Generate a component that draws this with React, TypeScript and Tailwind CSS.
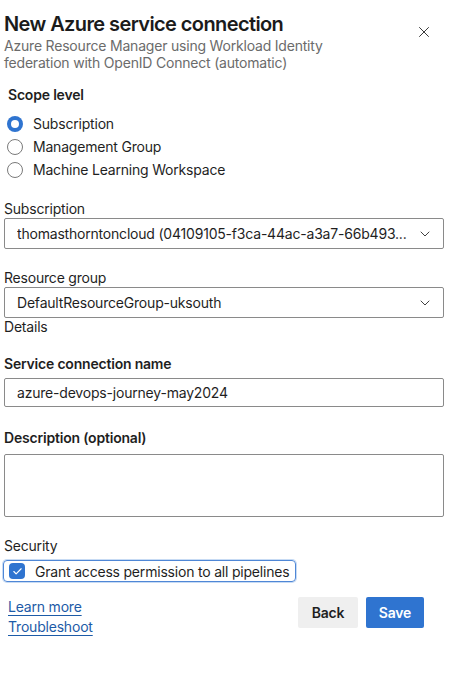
import { ChevronDown, X, Check } from 'lucide-react';

// Service connection panel — "Workload Identity federation (automatic)" step.

const radioOptions = ['Subscription', 'Management Group', 'Machine Learning Workspace'];

function Radio({ label, checked }: { label: string; checked?: boolean }) {
  return (
    <div className="flex items-center h-[23px] pl-[7px]">
      {checked ? (
        <span className="w-[16px] h-[16px] rounded-full bg-[#2f74d0] flex items-center justify-center">
          <span className="w-[8px] h-[8px] rounded-full bg-white" />
        </span>
      ) : (
        <span className="w-[16px] h-[16px] rounded-full border border-[#7a7a7a] bg-white" />
      )}
      <span className="ml-[10px] text-[14px] text-[#1f1f1f]">{label}</span>
    </div>
  );
}

function Select({ value }: { value: string }) {
  return (
    <div className="ml-[4px] mr-[10px] h-[31px] border border-[#8a8a8a] rounded-[2px] flex items-center pl-[12px] pr-[10px]">
      <span className="flex-1 whitespace-nowrap overflow-hidden text-[14px] text-[#1f1f1f]">{value}</span>
      <ChevronDown size={16} strokeWidth={1.4} className="text-[#333] ml-2 shrink-0" />
    </div>
  );
}

export default function App() {
  return (
    <div
      className="w-[454px] h-[691px] bg-white text-[#1f1f1f] overflow-hidden tracking-[-0.2px]"
      style={{ fontFamily: 'Inter, "Noto Sans", sans-serif' }}
    >
      <div className="flex items-start justify-between pt-[12px] pl-[4px] pr-[21px]">
        <div>
          <h1 className="text-[20px] leading-[25px] font-semibold tracking-[-0.6px] text-[#1b1b1b]">
            New Azure service connection
          </h1>
          <p className="text-[14px] leading-[17px] text-[#6b6b6b]">
            Azure Resource Manager using Workload Identity
            <br />
            federation with OpenID Connect (automatic)
          </p>
        </div>
        <X size={18} strokeWidth={1.3} className="mt-[11px] text-[#333]" />
      </div>

      <div className="mt-[15px] pl-[8px] text-[14px] leading-[18px] font-semibold">Scope level</div>
      <div className="mt-[8px]">
        {radioOptions.map((o, i) => (
          <Radio key={o} label={o} checked={i === 0} />
        ))}
      </div>

      <div className="mt-[19px] pl-[4px] text-[14px] leading-[18px]">Subscription</div>
      <Select value="thomasthorntoncloud (04109105-f3ca-44ac-a3a7-66b493..." />

      <div className="mt-[20px] pl-[4px] text-[14px] leading-[18px]">Resource group</div>
      <Select value="DefaultResourceGroup-uksouth" />
      <div className="pl-[4px] text-[14px] leading-[18px]">Details</div>

      <div className="mt-[19px] pl-[4px] text-[14px] leading-[18px] font-semibold">Service connection name</div>
      <div className="mt-[5px] ml-[4px] mr-[10px] h-[29px] border border-[#8a8a8a] rounded-[2px] flex items-center pl-[12px] text-[14px]">
        azure-devops-journey-may2024
      </div>

      <div className="mt-[22px] pl-[4px] text-[14px] leading-[18px] font-semibold">Description (optional)</div>
      <div className="mt-[7px] ml-[4px] mr-[10px] h-[63px] border border-[#8a8a8a] rounded-[2px]" />

      <div className="mt-[20px] pl-[4px] text-[14px] leading-[18px]">Security</div>
      <div className="mt-[5px] ml-[3px] w-[293px] h-[22px] border border-[#4f87d6] rounded-[4px] ring-1 ring-[#c7dbf4] flex items-center pl-[5px] whitespace-nowrap">
        <span className="w-[16px] h-[16px] rounded-[4px] bg-[#2f74d0] flex items-center justify-center shrink-0">
          <Check size={11} strokeWidth={2.5} className="text-white" />
        </span>
        <span className="ml-[10px] text-[14px]">Grant access permission to all pipelines</span>
      </div>

      <div className="mt-[15px] flex items-start justify-between pl-[8px] pr-[30px]">
        <div className="flex flex-col text-[14px] leading-[20px] text-[#1d5ba7]">
          <a className="underline underline-offset-[3px]">Learn more</a>
          <a className="underline underline-offset-[3px]">Troubleshoot</a>
        </div>
        <div className="flex gap-[8px]">
          <button className="w-[60px] h-[31px] rounded-[2px] bg-[#efefef] text-[14px] font-semibold text-[#1f1f1f]">
            Back
          </button>
          <button className="w-[58px] h-[31px] rounded-[2px] bg-[#2f74d0] text-[14px] font-semibold text-white">
            Save
          </button>
        </div>
      </div>
    </div>
  );
}
